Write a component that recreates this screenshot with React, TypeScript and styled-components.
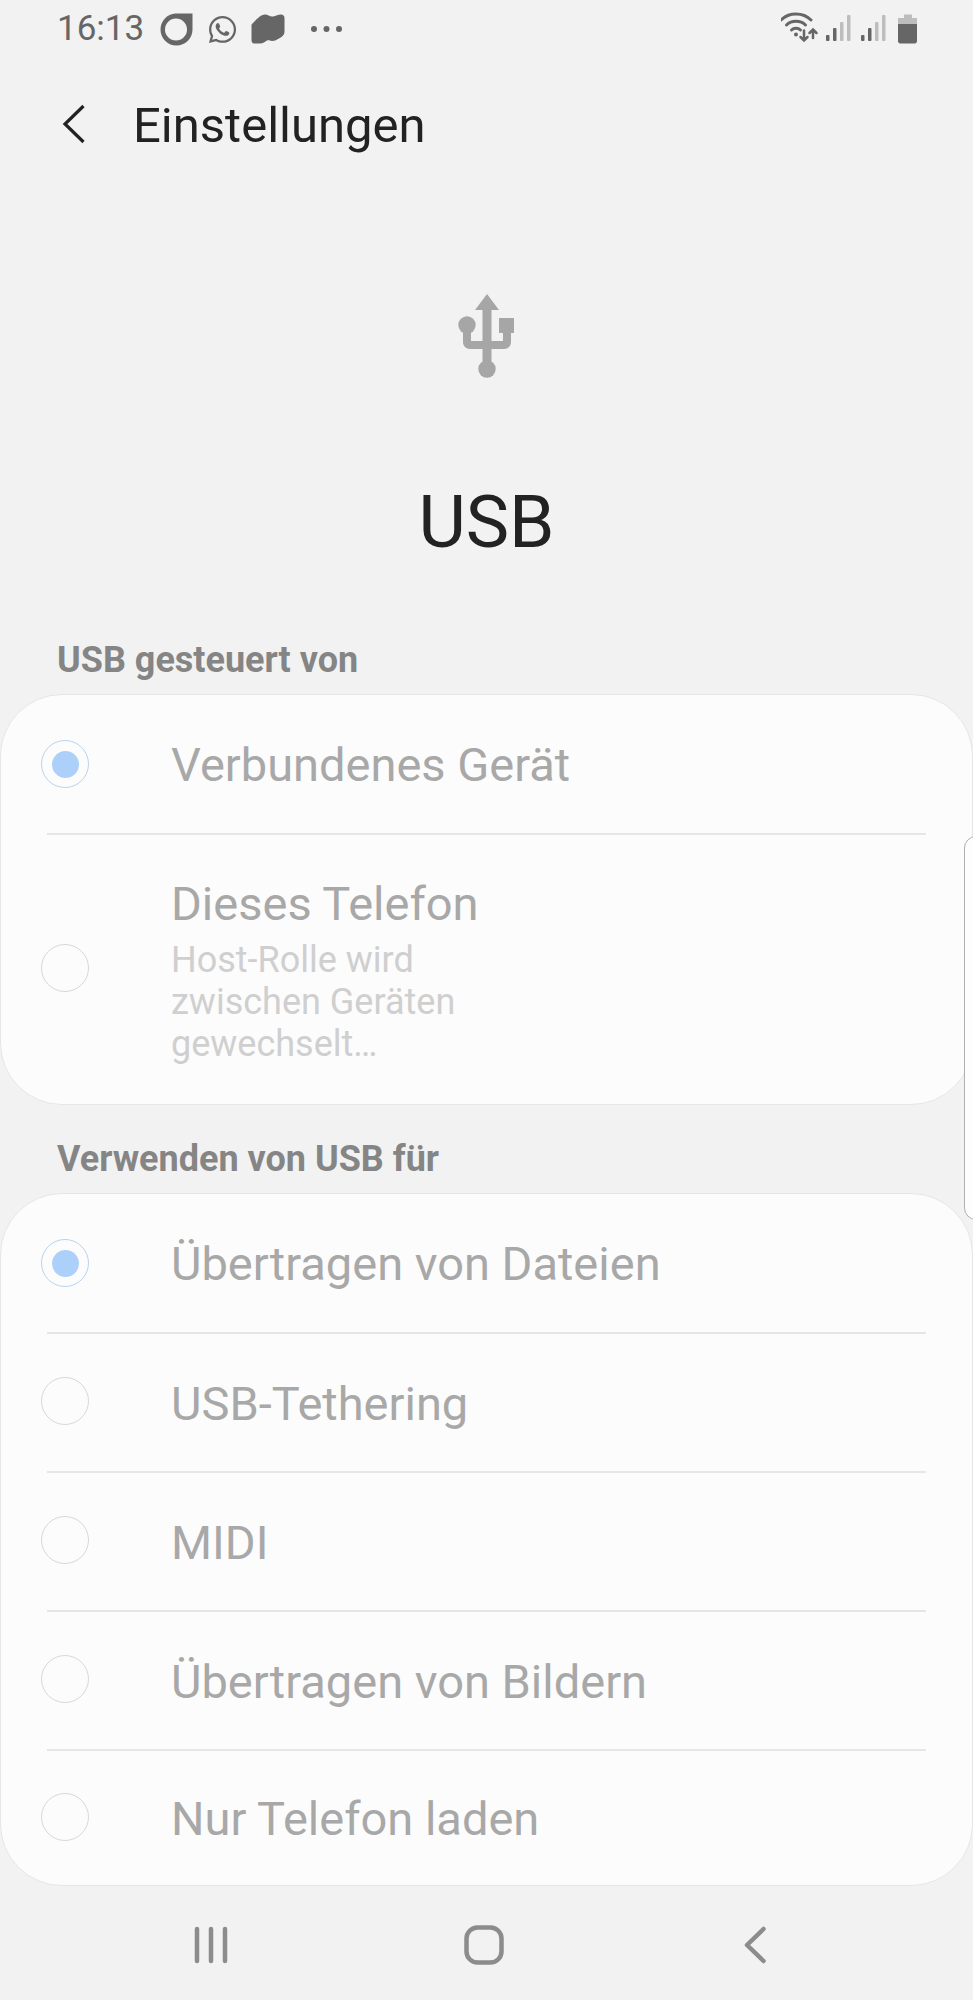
import React from "react";
import styled, { createGlobalStyle } from "styled-components";
import { FaWhatsapp } from "react-icons/fa";

const GlobalStyle = createGlobalStyle`
	html, body {
		margin: 0;
		padding: 0;
		background: #f2f2f2;
	}
	* {
		box-sizing: border-box;
	}
`;

const Page = styled.div`
	position: relative;
	width: 973px;
	height: 2000px;
	overflow: hidden;
	display: flex;
	flex-direction: column;
	background: #f2f2f2;
	font-family: Roboto, "Liberation Sans", sans-serif;
`;

const StatusBar = styled.div`
	height: 58px;
	padding: 12px 52px 0 57px;
	display: flex;
	justify-content: space-between;
	align-items: flex-start;
`;

const StatusLeft = styled.div`
	display: flex;
	align-items: center;
	height: 34px;
	color: #666;
`;

const Clock = styled.span`
	font-size: 35px;
	line-height: 34px;
	width: 102px;
`;

const Header = styled.div`
	height: 132px;
	display: flex;
	align-items: center;
	padding-left: 62px;
`;

const PageName = styled.span`
	font-size: 49px;
	color: #222;
	margin: 2px 0 0 47px;
`;

const Hero = styled.div`
	padding-top: 102px;
	height: 450px;
	display: flex;
	flex-direction: column;
	align-items: center;
`;

const HeroTitle = styled.h1`
	margin: 97px 0 0;
	font-size: 73px;
	line-height: 86px;
	font-weight: 400;
	color: #222;
`;

const SectionLabel = styled.div`
	height: 54px;
	padding: 0 0 14px 57px;
	display: flex;
	align-items: center;
	font-size: 36px;
	font-weight: 700;
	color: #858585;
`;

const Card = styled.div`
	background: #fcfcfc;
	border: 1px solid #e6e6e6;
	border-radius: 62px;
`;

const Row = styled.div<{ $height?: number }>`
	height: ${(p) => p.$height ?? 137}px;
	display: flex;
	align-items: center;
	padding: 2px 0 0 40px;
	gap: 82px;
`;

const Radio = styled.div<{ $on?: boolean }>`
	width: 48px;
	height: 48px;
	flex: none;
	margin-bottom: ${(p) => (p.$on ? 2 : 5)}px;
	border-radius: 50%;
	border: 1.5px solid ${(p) => (p.$on ? "#b8d4ef" : "#d8d8d8")};
	display: flex;
	align-items: center;
	justify-content: center;

	&::after {
		content: "";
		display: ${(p) => (p.$on ? "block" : "none")};
		width: 27px;
		height: 27px;
		border-radius: 50%;
		background: #add0fb;
	}
`;

const RowText = styled.div`
	display: flex;
	flex-direction: column;
	margin-top: 1px;
`;

const RowTitle = styled.div`
	font-size: 47px;
	line-height: 54px;
	color: #a8a8a8;
`;

const RowSub = styled.div`
	margin-top: 8px;
	font-size: 36px;
	line-height: 42px;
	color: #cfcfcf;
`;

const Divider = styled.div`
	height: 2px;
	margin: 0 46px;
	background: #e6e6e6;
`;

const SecondSection = styled.div`
	margin-top: 34px;
`;

const NavBar = styled.div`
	position: absolute;
	left: 0;
	right: 0;
	bottom: 0;
	height: 110px;
`;

const NavIcons = styled.div`
	height: 100%;
	padding: 0 207px 0 194px;
	display: flex;
	align-items: center;
	justify-content: space-between;
`;

const EdgeHandle = styled.div`
	position: absolute;
	top: 836px;
	right: -15px;
	width: 24px;
	height: 384px;
	border: 1.5px solid #b0b0b0;
	border-radius: 12px;
	background: #fdfdfd;
`;

const StatusSvg = styled.svg`
	display: block;
	flex: none;
`;

function RingIcon() {
	return (
		<StatusSvg width="34" height="33" viewBox="0 0 34 33" style={{ marginRight: 14 }}>
			<path
				fillRule="evenodd"
				fill="#666"
				d="M16.500 0.500H33.500V17A16 16 0 1 1 16.500 0.500ZM17 5.500A11 11 0 1 0 28 16.500A11 11 0 0 0 17 5.500Z"
			/>
		</StatusSvg>
	);
}

function CloudIcon() {
	return (
		<StatusSvg width="34" height="30" viewBox="0 0 34 30" style={{ marginLeft: 13 }}>
			<path
				fill="#666"
				d="M1 10C5 6 9 1 14 0.500C17 0.500 19 3 22 2.500C25 2 27 0.500 30 0.500C32 0.500 33.500 2 33.500 4V18C33.500 21 31 23 28 24.500C26 25.500 24 27 21 27C19 27 18 26 16 26.500C14 27.500 12 29.500 9 29.500H3C1.500 29.500 0.500 28 0.500 26V12C0.500 11 0.500 10.500 1 10Z"
			/>
		</StatusSvg>
	);
}

function MoreDots() {
	return (
		<StatusSvg width="32" height="8" viewBox="0 0 32 8" style={{ marginLeft: 26 }}>
			<circle cx="3" cy="4" r="3" fill="#666" />
			<circle cx="15.500" cy="4" r="3" fill="#666" />
			<circle cx="28" cy="4" r="3" fill="#666" />
		</StatusSvg>
	);
}

function SignalBars() {
	return (
		<g>
			<rect x="0" y="20" width="3.500" height="6" rx="1" fill="#666" />
			<rect x="7" y="13" width="3.500" height="13" rx="1" fill="#666" />
			<rect x="14" y="7" width="3.500" height="19" rx="1" fill="#bdbdbd" />
			<rect x="21" y="0" width="3.500" height="26" rx="1" fill="#bdbdbd" />
		</g>
	);
}

function StatusRight() {
	return (
		<StatusSvg width="140" height="34" viewBox="0 0 140 34">
			<g fill="none" stroke="#666" strokeWidth="3" strokeLinecap="round">
				<path d="M0 8C8 0 22 0 30 8" />
				<path d="M5.500 13C10.500 8 19.500 8 24.500 13" />
				<path d="M10.500 18C13 15.500 17 15.500 19.500 18" />
				<path d="M23 18.500V28.500M19.500 25L23 28.500L26.500 25" strokeWidth="2.500" />
				<path d="M32 26V17.500M28.500 21L32 17.500L35.500 21" strokeWidth="2.500" />
			</g>
			<circle cx="15" cy="22.500" r="2" fill="#666" />
			<g transform="translate(45 3)">
				<SignalBars />
			</g>
			<g transform="translate(80 3)">
				<SignalBars />
			</g>
			<path d="M123 2.500H131V6H136V12H117V6H123Z" fill="#bdbdbd" />
			<path d="M117 12H136V29C136 30.500 135 31.500 134 31.500H119C118 31.500 117 30.500 117 29Z" fill="#666" />
		</StatusSvg>
	);
}

function BackChevron() {
	return (
		<svg width="24" height="40" viewBox="0 0 24 40" style={{ display: "block" }}>
			<path d="M21.500 2L3 20L21.500 38" fill="none" stroke="#222" strokeWidth="3.200" />
		</svg>
	);
}

function UsbIcon() {
	return (
		<svg width="60" height="90" viewBox="0 0 60 90" style={{ display: "block" }}>
			<g fill="#a6a6a6">
				<path d="M30 2L42 18H18Z" />
				<rect x="25.500" y="16" width="9" height="62" />
				<circle cx="30" cy="77" r="8.700" />
				<circle cx="10" cy="33" r="8.700" />
				<path d="M6 33H14V49H46V38H54V50C54 54 51 57 47 57H13C9 57 6 54 6 50Z" />
				<rect x="42" y="26" width="15" height="15" />
			</g>
		</svg>
	);
}

function NavRecents() {
	return (
		<svg width="34" height="38" viewBox="0 0 34 38" style={{ display: "block" }}>
			<g stroke="#8c8c8c" strokeWidth="4.500" strokeLinecap="round">
				<path d="M3 3V35M17 3V35M31 3V35" />
			</g>
		</svg>
	);
}

function NavHome() {
	return (
		<svg width="40" height="40" viewBox="0 0 40 40" style={{ display: "block" }}>
			<rect x="2.500" y="2.500" width="35" height="35" rx="11" fill="none" stroke="#8c8c8c" strokeWidth="4.500" />
		</svg>
	);
}

function NavBack() {
	return (
		<svg width="26" height="38" viewBox="0 0 26 38" style={{ display: "block" }}>
			<path d="M23.500 3L7 19L23.500 35" fill="none" stroke="#8c8c8c" strokeWidth="4.500" strokeLinecap="round" strokeLinejoin="round" />
		</svg>
	);
}

export default function App() {
	return (
		<Page>
			<GlobalStyle />
			<StatusBar>
				<StatusLeft>
					<Clock>16:13</Clock>
					<RingIcon />
					<FaWhatsapp size={31} color="#666" />
					<CloudIcon />
					<MoreDots />
				</StatusLeft>
				<StatusRight />
			</StatusBar>
			<Header>
				<BackChevron />
				<PageName>Einstellungen</PageName>
			</Header>
			<Hero>
				<UsbIcon />
				<HeroTitle>USB</HeroTitle>
			</Hero>
			<SectionLabel>USB gesteuert von</SectionLabel>
			<Card>
				<Row $height={138}>
					<Radio $on />
					<RowTitle>Verbundenes Gerät</RowTitle>
				</Row>
				<Divider />
				<Row $height={269}>
					<Radio />
					<RowText>
						<RowTitle>Dieses Telefon</RowTitle>
						<RowSub>
							Host-Rolle wird
							<br />
							zwischen Geräten
							<br />
							gewechselt…
						</RowSub>
					</RowText>
				</Row>
			</Card>
			<SecondSection>
				<SectionLabel>Verwenden von USB für</SectionLabel>
				<Card>
					<Row $height={138}>
						<Radio $on />
						<RowTitle>Übertragen von Dateien</RowTitle>
					</Row>
					<Divider />
					<Row>
						<Radio />
						<RowTitle>USB-Tethering</RowTitle>
					</Row>
					<Divider />
					<Row>
						<Radio />
						<RowTitle>MIDI</RowTitle>
					</Row>
					<Divider />
					<Row>
						<Radio />
						<RowTitle>Übertragen von Bildern</RowTitle>
					</Row>
					<Divider />
					<Row $height={134}>
						<Radio />
						<RowTitle>Nur Telefon laden</RowTitle>
					</Row>
				</Card>
			</SecondSection>
			<NavBar>
				<NavIcons>
					<NavRecents />
					<NavHome />
					<NavBack />
				</NavIcons>
			</NavBar>
			<EdgeHandle />
		</Page>
	);
}
